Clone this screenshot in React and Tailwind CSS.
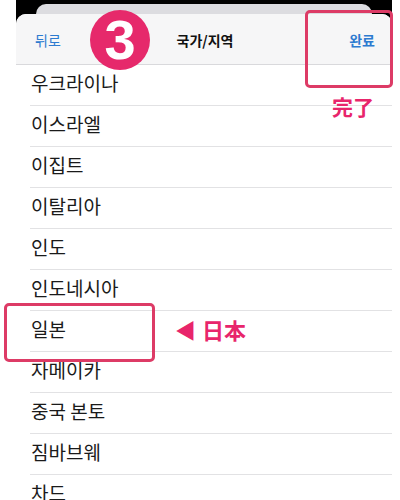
import React from 'react'

const countries = [
  '우크라이나',
  '이스라엘',
  '이집트',
  '이탈리아',
  '인도',
  '인도네시아',
  '일본',
  '자메이카',
  '중국 본토',
  '짐바브웨',
  '차드'
]

const kr = { fontFamily: '"Noto Sans CJK KR", "Noto Sans", sans-serif' }
const jp = { fontFamily: '"Noto Sans CJK JP", "Noto Sans", sans-serif' }

const App = () => {
  return (
    <div className="relative w-[400px] h-[500px] overflow-hidden bg-white" style={kr}>
      <div className="ml-[16px] w-[376px] bg-black pt-[4px]">
        <div className="mx-[20px] h-[10px] rounded-t-[10px] bg-[#dcdce0]" />
        <div className="rounded-t-[10px] bg-white overflow-hidden">
          <div className="h-[51px] bg-[#f6f6f7] border-b border-[#d9d9dc] flex items-center justify-between pl-[19px] pr-[17px] pt-[2px]">
            <span className="text-[14px] text-[#2d7bd0]">뒤로</span>
            <span className="text-[14px] font-semibold text-[#111]">국가/지역</span>
            <span className="text-[14px] font-semibold text-[#2d7bd0]">완료</span>
          </div>
          <div className="h-[440px]">
            {countries.map((name) => (
              <div
                key={name}
                className="ml-[14px] h-[41px] flex items-center border-b border-[#e2e2e4] pl-[1px] pb-[5px]"
              >
                <span className="text-[19px] text-[#1a1a1a] leading-none">{name}</span>
              </div>
            ))}
          </div>
        </div>
      </div>

      {/* step badge */}
      <div className="absolute left-[90px] top-[10px] w-[60px] h-[60px] rounded-full bg-[#e6296b] flex items-center justify-center">
        <span
          className="text-white text-[56px] font-bold leading-none"
          style={{ fontFamily: '"Liberation Sans", Arial, sans-serif' }}
        >
          3
        </span>
      </div>

      {/* highlight: done button */}
      <div className="absolute left-[305px] top-[10px] w-[88px] h-[78px] border-[3px] border-[#dd3b66] rounded-[5px]" />
      <div className="absolute left-[332px] top-[96px] text-[21px] font-bold text-[#e8256b] leading-none" style={jp}>
        完了
      </div>

      {/* highlight: Japan row */}
      <div className="absolute left-[4px] top-[303px] w-[151px] h-[59px] border-[3px] border-[#dd3b66] rounded-[5px]" />
      <div className="absolute left-[175px] top-[318px] flex items-center gap-[6px] text-[#e8256b] font-bold leading-none" style={jp}>
        <span className="text-[21px]">◀</span>
        <span className="text-[22px]">日本</span>
      </div>
    </div>
  )
}

export default App
